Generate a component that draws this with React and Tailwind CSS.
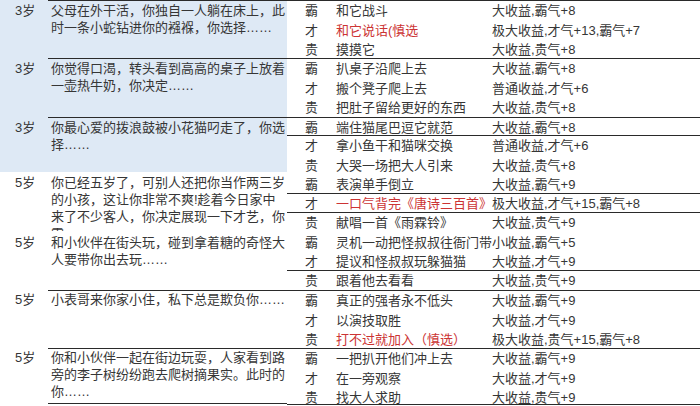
import React from "react";

const FONT = { fontFamily: '"Liberation Sans", "Noto Sans CJK SC", sans-serif' };

const leftRows = [
  { age: "3岁", h: "h-[58px]", pt: "pt-[1px]", border: "border-t", blue: true, lines: ["父母在外干活，你独自一人躺在床上，此", "时一条小蛇钻进你的襁褓，你选择……"] },
  { age: "3岁", h: "h-[59px]", pt: "pt-[1px]", border: "border-t", blue: true, lines: ["你觉得口渴，转头看到高高的桌子上放着", "一壶热牛奶，你决定……"] },
  { age: "3岁", h: "h-[55px]", pt: "pt-[1px]", border: "border-t", blue: true, lines: ["你最心爱的拨浪鼓被小花猫叼走了，你选", "择……"] },
  { age: "5岁", h: "h-[59px]", pt: "pt-[2px]", border: "", blue: false, lines: ["你已经五岁了，可别人还把你当作两三岁", "的小孩，这让你非常不爽!趁着今日家中", "来了不少客人，你决定展现一下才艺，你", "需……"] },
  { age: "5岁", h: "h-[59px]", pt: "pt-[3px]", border: "", blue: false, lines: ["和小伙伴在街头玩，碰到拿着糖的奇怪大", "人要带你出去玩……"] },
  { age: "5岁", h: "h-[58px]", pt: "pt-0", border: "border-t", blue: false, lines: ["小表哥来你家小住，私下总是欺负你……"] },
  { age: "5岁", h: "h-[56px]", pt: "pt-0", border: "border-t border-b", blue: false, lines: ["你和小伙伴一起在街边玩耍，人家看到路", "旁的李子树纷纷跑去爬树摘果实。此时的", "你……"] },
];

const groups = [
  { h: "h-[58px]", rows: [
    ["霸", "和它战斗", "大收益,霸气+8"],
    ["才", "和它说话(慎选", "极大收益,才气+13,霸气+7", true],
    ["贵", "摸摸它", "大收益,贵气+8"],
  ] },
  { h: "h-[59px]", rows: [
    ["霸", "扒桌子沿爬上去", "大收益,霸气+8"],
    ["才", "搬个凳子爬上去", "普通收益,才气+6"],
    ["贵", "把肚子留给更好的东西", "大收益,贵气+8"],
  ] },
  { h: "h-[18px]", rows: [
    ["霸", "端住猫尾巴逗它就范", "大收益,霸气+8"],
  ] },
  { h: "h-[58px]", rows: [
    ["才", "拿小鱼干和猫咪交换", "普通收益,才气+6"],
    ["贵", "大哭一场把大人引来", "大收益,贵气+8"],
    ["霸", "表演单手倒立", "大收益,霸气+9"],
  ] },
  { h: "h-[19px]", rows: [
    ["才", "一口气背完《唐诗三百首》", "极大收益,才气+15,霸气+8", true],
  ] },
  { h: "h-[58px]", rows: [
    ["贵", "献唱一首《雨霖铃》", "大收益,贵气+9"],
    ["霸", "灵机一动把怪叔叔往衙门带", "小收益,霸气+5"],
    ["才", "提议和怪叔叔玩躲猫猫", "大收益,才气+9"],
  ] },
  { h: "h-[20px]", rows: [
    ["贵", "跟着他去看看", "大收益,贵气+9"],
  ] },
  { h: "h-[58px]", rows: [
    ["霸", "真正的强者永不低头", "大收益,霸气+9"],
    ["才", "以演技取胜", "大收益,才气+9"],
    ["贵", "打不过就加入（慎选）", "极大收益,贵气+15,霸气+8", true],
  ] },
  { h: "h-[57px]", last: true, rows: [
    ["霸", "一把扒开他们冲上去", "大收益,霸气+9"],
    ["才", "在一旁观察", "大收益,才气+9"],
    ["贵", "找大人求助", "大收益,贵气+9"],
  ] },
];

function LeftRow({ r }) {
  return (
    <div className={`flex ${r.h} ${r.blue ? "bg-[#dee9f5]" : "bg-white"} overflow-hidden`}>
      <div className={`w-[48px] shrink-0 pl-[15px] ${r.pt} ${r.border ? "border-t border-transparent" : ""} leading-[17px]`}>
        {r.age}
      </div>
      <div className={`flex-1 pl-[3px] ${r.pt} ${r.border} border-[#2a2a2a] leading-[17px] whitespace-nowrap overflow-hidden`}>
        {r.lines.map((l, i) => (
          <div key={i}>{l}</div>
        ))}
      </div>
    </div>
  );
}

function Group({ g }) {
  return (
    <div className={`${g.h} flex flex-col border-t ${g.last ? "border-b" : ""} border-[#2a2a2a]`}>
      {g.rows.map((row, i) => (
        <div key={i} className="flex-1 flex items-center whitespace-nowrap">
          <div className="w-[49px] shrink-0 pl-[18px]">{row[0]}</div>
          <div className={`w-[156px] shrink-0 overflow-hidden ${row[3] ? "text-[#cc3434]" : ""}`}>{row[1]}</div>
          <div className="flex-1">{row[2]}</div>
        </div>
      ))}
    </div>
  );
}

export default function App() {
  return (
    <div className="w-[700px] h-[406px] overflow-hidden bg-white text-[13px] text-[#363636] flex" style={FONT}>
      <div className="w-[287px] shrink-0 flex flex-col">
        {leftRows.map((r, i) => (
          <LeftRow key={i} r={r} />
        ))}
      </div>
      <div className="flex-1 flex flex-col">
        {groups.map((g, i) => (
          <Group key={i} g={g} />
        ))}
      </div>
    </div>
  );
}
